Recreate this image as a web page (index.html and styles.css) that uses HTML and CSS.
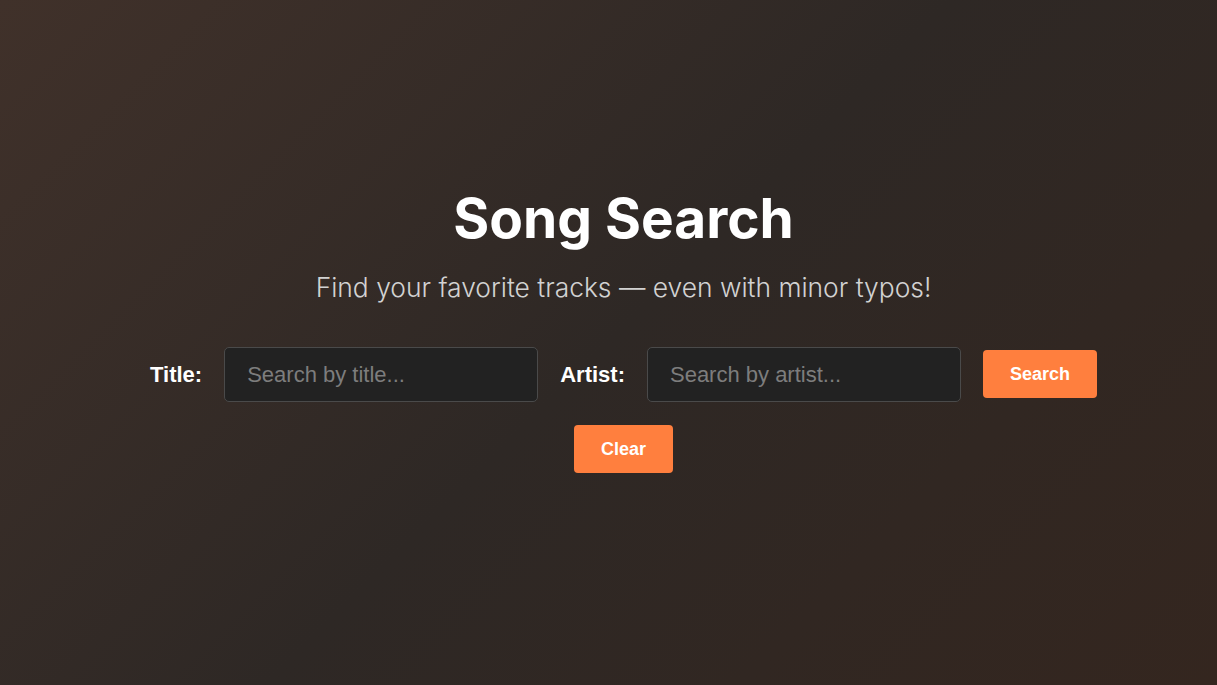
FILE: index.html
```html
<!DOCTYPE html>
<html lang="en">
<head>
<meta charset="utf-8">
<title>Song Search</title>
<link rel="stylesheet" href="styles.css">
</head>
<body>
<main class="page">
  <section class="hero">
    <h1 class="title">Song Search</h1>
    <p class="subtitle">Find your favorite tracks — even with minor typos!</p>
    <form class="search-form">
      <label class="field-label" for="title">Title:</label>
      <input class="field-input" id="title" type="text" placeholder="Search by title...">
      <label class="field-label" for="artist">Artist:</label>
      <input class="field-input" id="artist" type="text" placeholder="Search by artist...">
      <button class="btn" type="button">Search</button>
      <button class="btn btn-clear" type="button">Clear</button>
    </form>
  </section>
</main>
</body>
</html>
```
FILE: styles.css
```css
* { box-sizing: border-box; }
html, body { margin: 0; height: 100%; }
body {
  background: linear-gradient(135deg, #40312a 0%, #2e2825 50%, #34261f 100%);
  color: #fff;
  font-family: "Liberation Sans", Arial, sans-serif;
  overflow: hidden;
}
.page {
  height: 685px;
  padding-left: 30px;
  display: flex;
  align-items: center;
  justify-content: center;
}
.hero {
  display: flex;
  flex-direction: column;
  align-items: center;
  margin-top: -28px;
}
.title {
  font-family: Inter, sans-serif;
  font-weight: 700;
  font-size: 55px;
  line-height: 66px;
  margin: 0;
  color: #fff;
}
.subtitle {
  font-family: Inter, sans-serif;
  font-weight: 300;
  font-size: 26.4px;
  line-height: 32px;
  color: #d2d2d2;
  margin: 20px 0 44px;
}
.search-form {
  display: flex;
  flex-wrap: wrap;
  justify-content: center;
  align-items: center;
  column-gap: 22px;
  row-gap: 23px;
  width: 1000px;
}
.field-label {
  font-weight: 700;
  font-size: 22px;
  line-height: 30px;
  padding-top: 2px;
  color: #fff;
}
.field-input {
  width: 314px;
  height: 55px;
  background: #222222;
  border: 1px solid #4a4a4a;
  border-radius: 5px;
  padding: 2px 22px 0;
  font-family: "Liberation Sans", Arial, sans-serif;
  font-size: 22px;
  color: #eee;
  outline: none;
}
.field-input::placeholder { color: #7d7d7d; }
.btn {
  height: 48px;
  width: 114px;
  background: #ff7f3e;
  border: none;
  border-radius: 4px;
  padding-top: 2px;
  color: #fff;
  font-family: "Liberation Sans", Arial, sans-serif;
  font-weight: 700;
  font-size: 18px;
  cursor: pointer;
}
.btn-clear { width: 99px; }
```
